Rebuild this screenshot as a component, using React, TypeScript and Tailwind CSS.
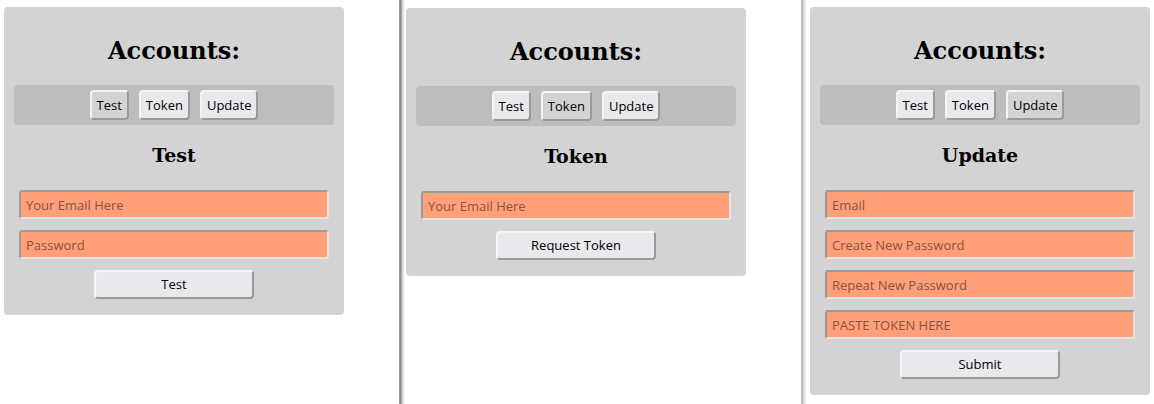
import React from "react";

const sans = "font-['Open_Sans',sans-serif]";

function TabBar({ active }: { active: string }) {
  const tabs = ["Test", "Token", "Update"];
  return (
    <div className="flex h-10 items-center justify-center gap-[10px] rounded-[4px] bg-[#bdbdbd]">
      {tabs.map((t) => (
        <button
          key={t}
          className={`h-[30px] rounded-[4px] border-2 border-t-[#f4f4f4] border-l-[#f4f4f4] border-b-[#9a9a9a] border-r-[#9a9a9a] px-[5px] pt-px text-[13px] text-black ${sans} ${
            t === active ? "bg-[#d3d3d3]" : "bg-[#e9e9ed]"
          }`}
        >
          {t}
        </button>
      ))}
    </div>
  );
}

function Field({ ph }: { ph: string }) {
  return (
    <input
      placeholder={ph}
      className={`h-[29px] w-[310px] rounded-[3px] border-2 border-t-[#9a9a9a] border-l-[#9a9a9a] border-b-[#e4e4e4] border-r-[#e4e4e4] bg-[#ffa07a] px-[5px] text-[13px] text-black placeholder:text-[#8a5440] outline-none ${sans}`}
    />
  );
}

function Panel({
  active,
  fields,
  button,
}: {
  active: string;
  fields: string[];
  button: string;
}) {
  return (
    <div className="flex w-[340px] flex-col rounded-[4px] bg-[#d3d3d3] px-[10px] pb-4">
      <h2 className="mt-[28px] h-8 text-center font-['DejaVu_Serif',serif] text-[24px] font-bold leading-8 text-black">
        Accounts:
      </h2>
      <div className="mt-[18px]">
        <TabBar active={active} />
      </div>
      <h3 className="mt-[18px] h-6 text-center font-['DejaVu_Serif',serif] text-[19px] font-bold leading-6 text-black">
        {active}
      </h3>
      <div className="mt-[23px] flex flex-col items-center gap-[11px]">
        {fields.map((f) => (
          <Field key={f} ph={f} />
        ))}
        <button
          className={`h-[29px] w-[160px] rounded-[4px] border-2 border-t-[#f4f4f4] border-l-[#f4f4f4] border-b-[#9a9a9a] border-r-[#9a9a9a] bg-[#e9e9ed] pt-px text-[13px] text-black ${sans}`}
        >
          {button}
        </button>
      </div>
    </div>
  );
}

function Sep({ dark }: { dark?: boolean }) {
  return (
    <div
      className={`w-[6px] shrink-0 self-stretch ${
        dark
          ? "bg-[linear-gradient(to_right,#9a9a9a,#8c8c8c_30%,#d8d8d8_60%,#ffffff)]"
          : "bg-[linear-gradient(to_right,#c4c4c4,#bdbdbd_30%,#ececec_60%,#ffffff)]"
      }`}
    />
  );
}

export default function App() {
  return (
    <div className="flex h-[404px] w-[1154px] overflow-hidden bg-white">
      <div className="w-[399px] shrink-0 pl-[4px] pt-[7px]">
        <Panel active="Test" fields={["Your Email Here", "Password"]} button="Test" />
      </div>
      <Sep dark />
      <div className="w-[396px] shrink-0 pl-[1px] pt-[8px]">
        <Panel active="Token" fields={["Your Email Here"]} button="Request Token" />
      </div>
      <Sep />
      <div className="shrink-0 pl-[3px] pt-[7px]">
        <Panel
          active="Update"
          fields={["Email", "Create New Password", "Repeat New Password", "PASTE TOKEN HERE"]}
          button="Submit"
        />
      </div>
    </div>
  );
}
